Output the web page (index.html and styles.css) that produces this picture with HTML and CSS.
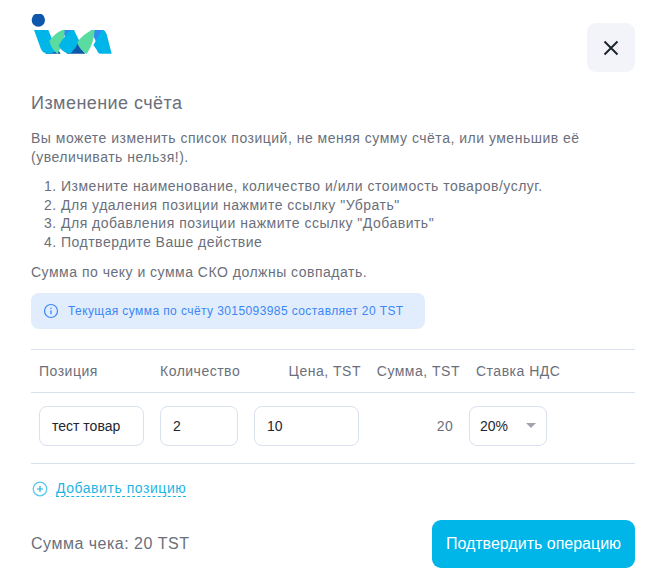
FILE: index.html
```html
<!DOCTYPE html>
<html lang="ru">
<head>
<meta charset="utf-8">
<title>Изменение счёта</title>
<link rel="stylesheet" href="styles.css">
</head>
<body>
<main class="modal">
  <header class="top">
    <svg class="logo" width="81" height="41" viewBox="33 27 243 123">
      <circle cx="55" cy="45" r="20" fill="#0f56ad"/>
      <path d="M76 146L100 112L122 146Z" fill="#0f56ad"/>
      <path d="M140 146L165 105L196 146Z" fill="#0f56ad"/>
      <path d="M126 75H158L140 106Z" fill="#2e8dee"/>
      <path d="M212 75H248L228 110Z" fill="#2e8dee"/>
      <path d="M42 75H85L110 136Q100 146 88 146H84Q68 146 62 130Z" fill="#00b5e8"/>
      <path d="M88 108Q104 84 128 75H134Q134 112 112 147Q94 132 88 108Z" fill="#5adb9f"/>
      <path d="M116 122Q134 90 154 75H162L178 108Q168 130 150 147Q126 142 116 122Z" fill="#00b5e8"/>
      <path d="M172 112Q188 88 216 75H224Q222 115 200 147Q178 135 172 112Z" fill="#5adb9f"/>
      <path d="M226 110L246 75H250Q258 78 262 95L275 146H242Q234 146 230 134L220 120Z" fill="#00b5e8"/>
    </svg>
    <button class="close" type="button" aria-label="Закрыть">
      <svg width="16" height="16" viewBox="0 0 16 16"><path d="M1.500 1.500l13 13M14.500 1.500l-13 13" stroke="#1c2530" stroke-width="2" fill="none"/></svg>
    </button>
  </header>

  <h1 class="title">Изменение счёта</h1>
  <p class="text intro">Вы можете изменить список позиций, не меняя сумму счёта, или уменьшив её (увеличивать нельзя!).</p>
  <ol class="steps text">
    <li>Измените наименование, количество и/или стоимость товаров/услуг.</li>
    <li>Для удаления позиции нажмите ссылку "Убрать"</li>
    <li>Для добавления позиции нажмите ссылку "Добавить"</li>
    <li>Подтвердите Ваше действие</li>
  </ol>
  <p class="text note">Сумма по чеку и сумма СКО должны совпадать.</p>

  <div class="alert">
    <svg width="16" height="16" viewBox="0 0 16 16" fill="none"><circle cx="8" cy="8" r="6.500" stroke="#3b87f5" stroke-width="1.200"/><path d="M8 7.300v4" stroke="#3b87f5" stroke-width="1.300"/><circle cx="8" cy="5.200" r=".8" fill="#3b87f5"/></svg>
    <span>Текущая сумма по счёту 3015093985 составляет 20 TST</span>
  </div>

  <section class="table">
    <div class="row head">
      <div class="cell c1">Позиция</div>
      <div class="cell c2">Количество</div>
      <div class="cell c3 end">Цена, TST</div>
      <div class="cell c4 end">Сумма, TST</div>
      <div class="cell c5">Ставка НДС</div>
    </div>
    <div class="row body">
      <div class="cell c1"><input class="field f-name" value="тест товар"></div>
      <div class="cell c2"><input class="field f-qty" value="2"></div>
      <div class="cell c3"><input class="field f-price" value="10"></div>
      <div class="cell c4 end sum">20</div>
      <div class="cell c5">
        <div class="select"><span>20%</span><i class="caret"></i></div>
      </div>
    </div>
  </section>

  <div class="add">
    <svg width="16" height="16" viewBox="0 0 16 16" fill="none"><circle cx="8" cy="8" r="6.800" stroke="#5cc8ee" stroke-width="1.300"/><path d="M8 5v6M5 8h6" stroke="#1fb4e4" stroke-width="1.200"/></svg>
    <a class="add-link">Добавить позицию</a>
  </div>

  <footer class="foot">
    <div class="total">Сумма чека: 20 TST</div>
    <button class="submit" type="button">Подтвердить операцию</button>
  </footer>
</main>
</body>
</html>
```

FILE: styles.css
```css
* { box-sizing: border-box; }
html, body { margin: 0; padding: 0; background: #fff; }
body { font-family: "Liberation Sans", Arial, sans-serif; color: #6b6f7b; }
.modal { width: 663px; height: 584px; padding: 14px 28px 0 31px; overflow: hidden; }
.top { display: flex; justify-content: space-between; align-items: flex-start; height: 72px; }
.logo { display: block; }
.close { margin-top: 9px; width: 48px; height: 49px; border: 0; border-radius: 9px; background: #f3f4f9; display: flex; align-items: center; justify-content: center; padding: 0; }
.title { margin: 7px 0 0; font-size: 18px; line-height: 20px; font-weight: 400; color: #6b6f7b; letter-spacing: .45px; }
.text { font-size: 14px; line-height: 18.500px; letter-spacing: .5px; color: #6b6f7b; }
.intro { margin: 16px 0 0; }
.steps { margin: 11px 0 0; padding: 0 0 0 30px; }
.note { margin: 12px 0 0; }
.alert { margin-top: 11px; width: 394px; height: 36px; border-radius: 8px; background: #e1edfc; display: flex; align-items: center; gap: 9px; padding-left: 12px; font-size: 12px; letter-spacing: .41px; color: #3b87f5; }
.table { margin-top: 20px; border-top: 1px solid #d9e0ee; border-bottom: 1px solid #d9e0ee; }
.row { display: flex; align-items: center; }
.head { height: 43px; border-bottom: 1px solid #d9e0ee; font-size: 14px; letter-spacing: .5px; }
.body { height: 70px; padding-bottom: 4px; }
.cell { padding: 0 8px; }
.c1 { width: 121px; }
.c2 { width: 94px; }
.c3 { width: 121px; }
.c4 { width: 94px; }
.c5 { flex: 1; }
.end { text-align: right; }
.head .c3 { padding-right: 6px; }
.head .c4 { padding-right: 1px; }
.head .c5 { padding-left: 15px; }
.sum { font-size: 14px; letter-spacing: .3px; }
.field, .select { height: 40px; border: 1px solid #d9e0ee; border-radius: 8px; background: #fff; font-family: inherit; font-size: 14px; color: #22262f; letter-spacing: 0; }
.field { display: block; padding: 0 12px; outline: 0; }
.f-name { width: 105px; }
.f-qty { width: 78px; }
.f-price { width: 105px; }
.select { width: 78px; display: flex; align-items: center; justify-content: space-between; padding: 0 10px 0 10px; }
.caret { width: 0; height: 0; border-left: 5px solid transparent; border-right: 5px solid transparent; border-top: 5px solid #a0a3aa; }
.add { margin-top: 17px; display: flex; align-items: center; gap: 8px; height: 16px; padding-left: 1px; }
.add-link { font-size: 14px; letter-spacing: .55px; color: #1fb4e4; border-bottom: 1px dashed #1fb4e4; line-height: 16px; }
.foot { margin-top: 23px; display: flex; justify-content: space-between; align-items: center; }
.total { font-size: 16px; letter-spacing: .5px; color: #6b6f7b; }
.submit { width: 203px; height: 48px; border: 0; border-radius: 9px; background: #00b5e8; color: #fff; font-family: inherit; font-size: 16px; padding: 0; }
```
